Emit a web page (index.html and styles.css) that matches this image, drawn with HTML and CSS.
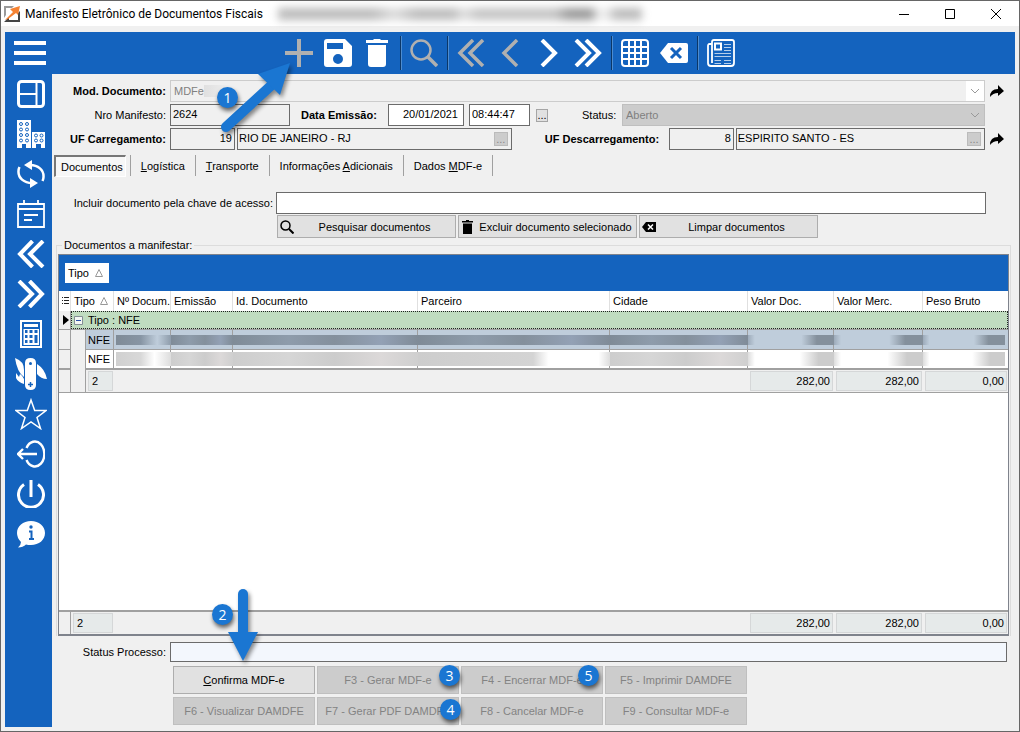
FILE: index.html
```html
<!DOCTYPE html>
<html lang="pt-BR">
<head>
<meta charset="utf-8">
<title>Manifesto Eletrônico de Documentos Fiscais</title>
<link rel="stylesheet" href="styles.css">
</head>
<body>
<div class="window">
  <header class="titlebar">
    <svg class="app-icon" viewBox="0 0 16 16"><path d="M0 0H10L8 2H2V9L0 12Z" fill="#999"/><path d="M0 16L5 11V14H14V7L16 5V16Z" fill="#444"/><path d="M1 14L9 6L6 3L16 0L14 9L12 7L4 13Z" fill="#f58232"/></svg>
    <h1 class="title">Manifesto Eletrônico de Documentos Fiscais</h1>
    <span class="title-smudge"></span>
    <div class="window-controls">
      <button aria-label="Minimizar"><svg viewBox="0 0 10 10"><path d="M0 5.500H10"/></svg></button>
      <button aria-label="Maximizar"><svg viewBox="0 0 10 10"><path d="M.5 .5H9.500V9.500H.5Z"/></svg></button>
      <button aria-label="Fechar"><svg viewBox="0 0 10 10"><path d="M0 0L10 10M10 0L0 10"/></svg></button>
    </div>
  </header>

  <div class="app">
    <nav class="toolbar">
      <button class="menu" aria-label="Menu"><svg viewBox="0 0 32 24"><path d="M0 2H32M0 12H32M0 22H32" stroke="#fff" stroke-width="4"/></svg></button>
      <div class="tools">
        <button class="off" aria-label="Novo"><svg viewBox="0 0 28 28"><path d="M14 0V28M0 14H28" stroke-width="4"/></svg></button>
        <button aria-label="Salvar"><svg viewBox="0 0 28 28"><path class="fill" fill-rule="evenodd" d="M3 0H21L28 7V25Q28 28 25 28H3Q0 28 0 25V3Q0 0 3 0ZM3 4V10H19V4ZM14 15A5 5 0 1 0 14 25A5 5 0 1 0 14 15Z"/></svg></button>
        <button aria-label="Excluir"><svg viewBox="0 0 28 28"><path class="fill" d="M3 1H10L11 0H17L18 1H25V4H3ZM5 6H23V25Q23 28 20 28H8Q5 28 5 25Z"/></svg></button>
        <i class="sep"></i>
        <button class="off" aria-label="Pesquisar"><svg viewBox="0 0 28 28"><circle cx="11" cy="11" r="9.500" stroke-width="2.500"/><path d="M18 18L27 27" stroke-width="3.500"/></svg></button>
        <i class="sep"></i>
        <button class="off" aria-label="Primeiro"><svg viewBox="0 0 28 28"><path d="M16 1L3 14L16 27M26 1L13 14L26 27" stroke-width="3.500"/></svg></button>
        <button class="off" aria-label="Anterior"><svg viewBox="0 0 28 28"><path d="M21 1L8 14L21 27" stroke-width="3.500"/></svg></button>
        <button aria-label="Próximo"><svg viewBox="0 0 28 28"><path d="M7 1L20 14L7 27" stroke-width="4"/></svg></button>
        <button aria-label="Último"><svg viewBox="0 0 28 28"><path d="M2 1L15 14L2 27M12 1L25 14L12 27" stroke-width="4"/></svg></button>
        <i class="sep"></i>
        <button aria-label="Grade"><svg viewBox="0 0 28 28"><rect x="1" y="1" width="26" height="26" rx="3" stroke-width="2"/><path d="M1 8H27M1 14H27M1 20H27M8 1V27M14 1V27M20 1V27" stroke-width="2"/></svg></button>
        <button aria-label="Limpar"><svg viewBox="0 0 28 28"><path class="fill" d="M8 4H26Q28 4 28 6V22Q28 24 26 24H8L0 14Z"/><path d="M11 9L21 19M21 9L11 19" stroke="#1463be" stroke-width="3"/></svg></button>
        <i class="sep"></i>
        <button aria-label="Relatório"><svg viewBox="0 0 28 28"><path d="M5 5H2.500Q1 5 1 7V24Q1 27 4 27H24Q27 27 27 24V3Q27 1 25 1H7Q5 1 5 3V24" stroke-width="1.800"/><rect x="8" y="4.500" width="6" height="6" stroke-width="2"/><path d="M17 5.500H24M17 8.500H24M17 11.500H24M7.500 14.500H24M7.500 17.500H24M7.500 21.500H14M17 21.500H24M7.500 24.500H14M17 24.500H24" stroke="#b7cfea" stroke-width="1"/></svg></button>
      </div>
    </nav>

    <aside class="sidebar">
      <button aria-label="Painel"><svg viewBox="0 0 28 28"><rect x="1.500" y="1.500" width="25" height="25" rx="3" stroke-width="3"/><path d="M3 14H19M19.500 3V25" stroke-width="2"/></svg></button>
      <button aria-label="Empresas"><svg viewBox="0 0 28 28"><path class="fill" d="M0 0H14V28H9V24H5V28H0ZM15 12H28V28H24V24H19V28H15Z"/><g class="holes"><circle cx="4" cy="4" r="1.500"/><circle cx="10" cy="4" r="1.500"/><circle cx="4" cy="9.500" r="1.500"/><circle cx="10" cy="9.500" r="1.500"/><circle cx="4" cy="15" r="1.500"/><circle cx="10" cy="15" r="1.500"/><circle cx="4" cy="20.500" r="1.500"/><circle cx="10" cy="20.500" r="1.500"/><circle cx="19" cy="15.500" r="1.500"/><circle cx="24.500" cy="15.500" r="1.500"/><circle cx="19" cy="20.500" r="1.500"/><circle cx="24.500" cy="20.500" r="1.500"/></g></svg></button>
      <button aria-label="Atualizar"><svg viewBox="0 0 28 28"><path d="M13 5C21 5 27 10 26.500 17Q26.500 19 25.500 21M15 23C7 23 1 18 1.500 11Q1.500 9 2.500 7" stroke-width="2.500"/><path class="fill" d="M7 5L15 0V10ZM21 23L13 18V28Z"/></svg></button>
      <button aria-label="Agenda"><svg viewBox="0 0 28 28"><path d="M1 4H27V27H1ZM1 9H27" stroke-width="1.800"/><path d="M7 0V5M21 0V5M7 15H21M7 20H15" stroke-width="1.800"/></svg></button>
      <button aria-label="Voltar"><svg viewBox="0 0 28 28"><path d="M15.500 1L3 14L15.500 27M26 1L13 14L26 27" stroke-width="4"/></svg></button>
      <button aria-label="Avançar"><svg viewBox="0 0 28 28"><path d="M2 1L15 14L2 27M12.500 1L25 14L12.500 27" stroke-width="4"/></svg></button>
      <button aria-label="Calculadora"><svg viewBox="0 0 28 28"><rect x="4" y="1" width="20" height="26" stroke-width="2"/><path d="M7 5.500H21" stroke-width="3"/><path class="fill" d="M6.500 9H22V25H6.500Z"/><path d="M8 11.500H10.500M12.500 11.500H15.500M17.500 11.500H20.500M8 16.500H10.500M12.500 16.500H15.500M8 21.500H10.500M12.500 21.500H15.500" stroke="#1463be" stroke-width="3"/><path d="M19 15V23" stroke="#1463be" stroke-width="3"/></svg></button>
      <button class="wide" aria-label="Ferramentas"><svg viewBox="0 0 32 32"><path class="fill" d="M10 5Q10 0 15.500 0T21 5V27Q21 32 15.500 32T10 27ZM0 0Q9 3 9 12V19Q2 14 0 0ZM22 6Q30 11 32 21Q26 21 22 16ZM1 15L4 19L5 16Q8 18 9 21V26Q3 24 1 20Z"/><circle cx="15.500" cy="5.500" r="1.500" fill="#1463be" stroke="none"/><path d="M15.500 24V29M13 26.500H18" stroke="#1463be" stroke-width="1.500"/></svg></button>
      <button class="wide" aria-label="Favoritos"><svg viewBox="0 0 32 32"><path d="M16 2L19.700 12.500H31L22 19.500L25.500 30.500L16 24L6.500 30.500L10 19.500L1 12.500H12.300Z" stroke-width="1.500"/></svg></button>
      <button aria-label="Sair"><svg viewBox="0 0 28 28"><path d="M9.500 8A9.500 12.500 0 1 1 9.500 20M1 14H20M6 9L1 14L6 19" stroke-width="2.400"/></svg></button>
      <button aria-label="Desligar"><svg viewBox="0 0 28 28"><path d="M7 4.500A12.500 12.500 0 1 0 21 4.500M14 0V17" stroke-width="3"/></svg></button>
      <button aria-label="Informações"><svg viewBox="0 0 28 28"><path class="fill" d="M14 1C22 1 28 6 28 13C28 20 22 25 14 25Q11 25 9 24.500Q6 27.500 1 27.500Q4 25 4 22Q0 18 0 13C0 6 6 1 14 1Z"/><circle cx="14" cy="7" r="1.700" fill="#1463be" stroke="none"/><path d="M12 11.500H14.500V19M12 19H17" stroke="#1463be" stroke-width="2"/></svg></button>
    </aside>

    <main class="content">
      <form class="form">
        <div class="row">
          <label class="lead strong" for="modelo">Mod. Documento:</label>
          <div class="combo light grow"><select id="modelo" disabled><option>MDFe</option></select><span class="combo-smudge"></span><svg viewBox="0 0 10 6"><path d="M1 1L5 5L9 1"/></svg></div>
          <svg class="share" viewBox="0 0 14 13"><path d="M0 12Q0 4 8 4V0L14 6L8 11V8Q3 8 0 12Z"/></svg>
        </div>
        <div class="row">
          <label class="lead" for="numero">Nro Manifesto:</label>
          <input class="field w120 muted" id="numero" value="2624" readonly>
          <label class="strong emission" for="data">Data Emissão:</label>
          <input class="field w76 right" id="data" value="20/01/2021">
          <input class="field w61" aria-label="Hora" value="08:44:47">
          <button class="dots outer" type="button" aria-label="Escolher data">...</button>
          <label class="status-label" for="status">Status:</label>
          <div class="combo dark grow"><select id="status" disabled><option>Aberto</option></select><svg viewBox="0 0 10 6"><path d="M1 1L5 5L9 1"/></svg></div>
          <span class="share"></span>
        </div>
        <div class="row">
          <label class="lead strong" for="ufc">UF Carregamento:</label>
          <input class="field w65 muted right" id="ufc" value="19" readonly>
          <div class="lookup grow-a"><input class="field muted" aria-label="Estado de carregamento" value="RIO DE JANEIRO - RJ" readonly><button class="dots" type="button" disabled aria-label="Buscar carregamento">...</button></div>
          <label class="strong unload" for="ufd">UF Descarregamento:</label>
          <input class="field w65 muted right" id="ufd" value="8" readonly>
          <div class="lookup grow-b"><input class="field muted" aria-label="Estado de descarregamento" value="ESPIRITO SANTO - ES" readonly><button class="dots" type="button" disabled aria-label="Buscar descarregamento">...</button></div>
          <svg class="share" viewBox="0 0 14 13"><path d="M0 12Q0 4 8 4V0L14 6L8 11V8Q3 8 0 12Z"/></svg>
        </div>
      </form>

      <div class="tabs" role="tablist">
        <button class="tab active" role="tab">Documentos</button>
        <button class="tab" role="tab"><u>L</u>ogística</button>
        <button class="tab" role="tab"><u>T</u>ransporte</button>
        <button class="tab" role="tab">Informações <u>A</u>dicionais</button>
        <button class="tab" role="tab">Dados <u>M</u>DF-e</button>
      </div>

      <div class="row key-row">
        <label class="key-label" for="chave">Incluir documento pela chave de acesso:</label>
        <input class="field grow" id="chave">
      </div>
      <div class="actions">
        <button><svg viewBox="0 0 14 14"><circle cx="5.500" cy="5.500" r="4.500" fill="none" stroke="#000" stroke-width="1.500"/><path d="M9 9L13.500 13.500" stroke="#000" stroke-width="2"/></svg><span>Pesquisar documentos</span></button>
        <button><svg viewBox="0 0 14 14"><path d="M1 1H5V0H8V1H12V2.500H1ZM2 3.500H11V14H2Z"/></svg><span>Excluir documento selecionado</span></button>
        <button><svg viewBox="0 0 14 14"><path d="M4 2H14V12H4L0 7Z"/><path d="M6 4.500L11 9.500M11 4.500L6 9.500" stroke="#fff" stroke-width="1.500"/></svg><span>Limpar documentos</span></button>
      </div>

      <fieldset class="docs">
        <legend>Documentos a manifestar:</legend>
        <div class="grid">
          <div class="groupbar"><button class="chip">Tipo <svg viewBox="0 0 8 8"><path d="M4 .5L7.500 7.500H.5Z"/></svg></button></div>
          <table class="data">
            <colgroup><col class="c-mark"><col class="c-indent"><col class="c-tipo"><col class="c-num"><col class="c-emi"><col class="c-id"><col class="c-parc"><col class="c-cid"><col class="c-vd"><col class="c-vm"><col class="c-pb"></colgroup>
            <thead>
              <tr><th class="mark"><svg viewBox="0 0 8 10"><path d="M0 1.500H1M2 1.500H7M0 4.500H1M2 4.500H7M0 7.500H1M2 7.500H7" stroke="#222"/></svg></th><th colspan="2">Tipo <svg class="sort" viewBox="0 0 8 8"><path d="M4 .5L7.500 7.500H.5Z"/></svg></th><th>Nº Docum.</th><th>Emissão</th><th>Id. Documento</th><th>Parceiro</th><th>Cidade</th><th>Valor Doc.</th><th>Valor Merc.</th><th>Peso Bruto</th></tr>
            </thead>
            <tbody>
              <tr class="group"><td class="mark"><svg viewBox="0 0 6 10"><path d="M0 0L6 5L0 10Z"/></svg></td><td colspan="10"><div class="group-line"><svg viewBox="0 0 9 9"><path d="M.5 .5H8.500V8.500H.5Z" fill="#f4f7f4" stroke="#858f96"/><path d="M2 4.500H7" stroke="#2a50a8"/></svg>Tipo : NFE</div></td></tr>
              <tr class="selected"><td class="mark"></td><td class="indent"></td><td>NFE</td><td><i class="smudge part"></i></td><td><i class="smudge"></i></td><td><i class="smudge"></i></td><td><i class="smudge"></i></td><td><i class="smudge"></i></td><td><i class="smudge end"></i></td><td><i class="smudge end"></i></td><td><i class="smudge end"></i></td></tr>
              <tr class="plain"><td class="mark"></td><td class="indent"></td><td>NFE</td><td><i class="smudge part"></i></td><td><i class="smudge"></i></td><td><i class="smudge"></i></td><td><i class="smudge two-thirds"></i></td><td><i class="smudge"></i></td><td><i class="smudge end"></i></td><td><i class="smudge end"></i></td><td><i class="smudge end"></i></td></tr>
              <tr class="sum"><td class="mark"></td><td class="indent"></td><td><span class="box">2</span></td><td colspan="5"></td><td><span class="box num">282,00</span></td><td><span class="box num">282,00</span></td><td><span class="box num">0,00</span></td></tr>
            </tbody>
          </table>
          <div class="blank"></div>
          <table class="data total">
            <colgroup><col class="c-mark"><col class="c-indent"><col class="c-tipo"><col class="c-num"><col class="c-emi"><col class="c-id"><col class="c-parc"><col class="c-cid"><col class="c-vd"><col class="c-vm"><col class="c-pb"></colgroup>
            <tbody><tr class="sum"><td class="mark"></td><td colspan="2"><span class="box">2</span></td><td colspan="5"></td><td><span class="box num">282,00</span></td><td><span class="box num">282,00</span></td><td><span class="box num">0,00</span></td></tr></tbody>
          </table>
        </div>
      </fieldset>

      <div class="row process">
        <label class="lead" for="processo">Status Processo:</label>
        <input class="field grow" id="processo" readonly>
      </div>
      <div class="commands">
        <button><span><u>C</u>onfirma MDF-e</span></button>
        <button disabled>F3 - Gerar MDF-e</button>
        <button disabled>F4 - Encerrar MDF-e</button>
        <button disabled>F5 - Imprimir DAMDFE</button>
        <button disabled>F6 - Visualizar DAMDFE</button>
        <button disabled>F7 - Gerar PDF DAMDFE</button>
        <button disabled>F8 - Cancelar MDF-e</button>
        <button disabled>F9 - Consultar MDF-e</button>
      </div>
    </main>
  </div>

  <svg class="arrow arrow-new" viewBox="0 0 76 76"><path d="M7 67L56 22" stroke="#1a76d2" stroke-width="10" stroke-linecap="round"/><path d="M71 3L39 14L61 35Z" fill="#1a76d2"/></svg>
  <svg class="arrow arrow-confirm" viewBox="0 0 30 74"><path d="M15 6V48" stroke="#1a76d2" stroke-width="10" stroke-linecap="round"/><path d="M0 44H30L15 73Z" fill="#1a76d2"/></svg>
  <span class="badge b1">1</span>
  <span class="badge b2">2</span>
  <span class="badge b3">3</span>
  <span class="badge b4">4</span>
  <span class="badge b5">5</span>
</div>
</body>
</html>
```
FILE: styles.css
```css
* { box-sizing: border-box; }
html, body { height: 100%; }
body { margin: 0; font: 11px/14px "Liberation Sans", Arial, sans-serif; color: #000; }
button, input, select { font: inherit; color: inherit; margin: 0; padding: 0; border: 0; border-radius: 0; background: none; }
svg { display: block; flex: none; }

.window { position: relative; display: flex; flex-direction: column; min-height: 100%; background: #f0f0f0; border: 1px solid #666; }
.titlebar { display: flex; align-items: center; height: 25px; padding-left: 3px; background: #fff; }
.app-icon { width: 16px; height: 16px; }
.title { margin: 0 15px 0 5px; font: 12px/16px Roboto, "Open Sans", sans-serif; white-space: nowrap; }
.title-smudge { width: 364px; height: 12px; filter: blur(4px); background: linear-gradient(90deg, #bbb 0 26%, #ddd 32%, #bbb 38% 48%, #e0e0e0 51%, #c4c4c4 55% 76%, #999 80% 86%, #eee 88% 90%, #bbb 93%); }
.window-controls { display: flex; margin-left: auto; }
.window-controls button { display: grid; place-items: center; width: 46px; height: 24px; }
.window-controls svg { width: 10px; height: 10px; fill: none; stroke: #000; }

.app { flex: 1; display: grid; grid-template: 42px 1fr / 47px 1fr; margin: 6px 4px 4px; }
.toolbar { grid-column: 1 / -1; display: grid; grid-template-columns: 1fr auto 1fr; align-items: center; background: #1463be; }
.menu { justify-self: start; margin-left: 9px; }
.menu svg { width: 32px; height: 24px; }
.tools { display: flex; align-items: center; }
.tools button { display: grid; place-items: center; width: 39px; height: 42px; }
.tools svg, .sidebar svg { width: 28px; height: 28px; fill: none; stroke: #fff; }
.tools .fill, .sidebar .fill { fill: #fff; stroke: none; }
.tools .off svg { stroke: #b0b0b0; }
.holes { stroke: #1463be; }
.sep { width: 2px; height: 34px; margin: 0 3px; border-left: 1px solid #0b3768; border-right: 1px solid #4d8cd0; }
.sidebar { display: flex; flex-direction: column; padding-left: 5px; background: #1463be; }
.sidebar button { display: grid; place-items: center; height: 40px; }
.sidebar .wide svg { width: 32px; height: 32px; }

.content { display: flex; flex-direction: column; min-width: 0; padding-top: 6px; }
.form { display: flex; flex-direction: column; gap: 2px; }
.row { display: flex; align-items: center; height: 22px; padding-right: 11px; }
label { white-space: nowrap; }
.strong { font-weight: bold; }
.lead { width: 114px; margin-right: 4px; text-align: right; }
.grow { flex: 1; min-width: 0; }
.grow-a { flex: 275 1 0; }
.grow-b { flex: 249 1 0; }
.field { height: 22px; padding: 0 4px 2px 2px; border: 1px solid #6b6b6b; background: #fff; }
.muted { background: #f0f0f0; }
.right { text-align: right; padding-right: 5px; }
.w120 { width: 120px; }
.w76 { width: 76px; margin-right: 5px; }
.w61 { width: 61px; margin-right: 6px; }
.w65 { width: 65px; margin-right: 2px; padding-right: 2px; }
.emission { width: 87px; margin-left: 11px; }
.status-label { width: 40px; margin-left: 34px; }
.unload { width: 124px; margin-left: 33px; }
.dots { width: 14px; height: 14px; border: 1px solid #bbb; background: #ccc; color: #888; line-height: 10px; }
.dots.outer { width: 12px; height: 13px; border-color: #a5a5a5; background: #e1e1e1; color: #000; }
.lookup { display: flex; align-items: center; min-width: 0; height: 22px; padding-right: 3px; border: 1px solid #6b6b6b; }
.lookup .field { flex: 1; min-width: 0; height: 20px; padding-bottom: 2px; border: 0; padding-left: 1px; }
.combo { position: relative; display: flex; align-items: center; height: 22px; border: 1px solid #ccc; }
.combo select { width: 100%; height: 20px; padding-left: 3px; appearance: none; opacity: 1; color: #808080; }
.combo svg { position: absolute; right: 4px; width: 10px; height: 6px; fill: none; stroke: #999; }
.combo.light { background: linear-gradient(90deg, #f0f0f0 0 calc(100% - 18px), #fff 0); }
.combo.dark { border-color: #bfbfbf; background: #ccc; }
.combo-smudge { position: absolute; left: 33px; width: 28px; height: 12px; background: linear-gradient(90deg, #e0e0e0, #f0f0f0); }
.share { flex: none; width: 14px; height: 13px; margin-left: 5px; }

.tabs { display: flex; align-items: flex-start; height: 22px; margin: 5px 0 0 2px; }
.tab { height: 21px; padding: 0 10px; border-right: 1px solid #a0a0a0; white-space: nowrap; }
.tab.active { height: 22px; padding: 0 2px 0 5px; border: 1px solid #fff; border-top: 2px solid #777; border-left: 2px solid #777; background: #f7f7f7; }
.tab.active + .tab { margin-left: 4px; border-left: 1px solid #a0a0a0; }

.key-row { margin-top: 15px; padding-right: 29px; }
.key-label { width: 221px; margin-right: 3px; text-align: right; }
.actions { display: flex; gap: 2px; margin: 1px 0 0 225px; }
.actions button { display: flex; align-items: center; width: 179px; height: 23px; padding-left: 2px; border: 1px solid #adadad; background: #e1e1e1; }
.actions svg { width: 14px; height: 14px; }
.actions span { flex: 1; text-align: center; white-space: nowrap; }

.docs { flex: 1; display: flex; min-width: 0; margin: 0 4px 0 4px; padding: 2px 1px 0; border: 1px solid #dcdcdc; border-bottom: 0; }
.docs legend { margin-left: 4px; padding: 0 2px; line-height: 14px; }
.grid { flex: 1; display: flex; flex-direction: column; min-width: 0; height: 100%; border: 1px solid #7f838c; border-bottom-width: 2px; background: #fff; }
.groupbar { display: flex; align-items: center; height: 36px; padding-left: 6px; background: #1463be; }
.chip { display: flex; align-items: center; gap: 6px; width: 44px; height: 20px; padding-left: 3px; background: #fff; }
.chip svg, .sort { width: 8px; height: 8px; fill: none; stroke: #999; }
.data { width: 100%; table-layout: fixed; border-collapse: separate; border-spacing: 0; }
.c-mark { width: 12px; } .c-indent { width: 15px; } .c-tipo { width: 28px; } .c-num { width: 57px; } .c-emi { width: 62px; }
.c-id { width: 185px; } .c-cid { width: 138px; } .c-vd { width: 86px; } .c-vm { width: 89px; } .c-pb { width: 85px; }
.data th, .data td { height: 20px; padding: 0; white-space: nowrap; text-align: left; font-weight: normal; }
.data th { padding-left: 3px; border-right: 1px solid #e0e0e0; }
.data th:last-child { border-right: 0; }
.data .sort { display: inline-block; margin-left: 2px; }
.data td { border-right: 1px solid #a0a0a0; border-bottom: 1px solid #a0a0a0; }
.data td:last-child { border-right: 0; }
.data .mark, .data .indent { background: #f0f0f0; }
.data th.mark { background: #fff; }
.mark svg { width: 8px; height: 10px; }
.data td.mark svg { width: 6px; margin-left: 4px; }
.data .indent { border-bottom: 0; }
.data .group td { height: 19px; border-bottom: 1px solid #a0a0a0; }
.group-line { display: flex; align-items: center; gap: 5px; height: 18px; padding-left: 2px; border: 1px dotted #222; background: #c0dcc0; }
.group-line svg { width: 9px; height: 9px; }
.selected td { background: #bfcddb; padding-left: 2px; }
.plain td { padding-left: 2px; }
.plain td:not(.indent) { border-bottom-width: 2px; }
.smudge { display: block; height: 10px; margin: 0 -1px 0 -2px; background: linear-gradient(90deg, #7f8b97, #8e9cab 30%, #84909c 55%, #93a1b5 80%, #7f8b97); }
td:last-child .smudge { margin-right: 3px; }
.smudge.part { margin-left: 0; background: linear-gradient(90deg, #7f8b97, #8795a4 45%, #bfcddb 75%, #8e9cab); }
.smudge.end { background: linear-gradient(90deg, #9dabba, #bfcddb 8% 62%, #84909c 80%); }
.plain .smudge { height: 14px; background: linear-gradient(90deg, #cdcdcd, #d6d6d6 30%, #ccc 55%, #dcd9d9 80%, #cfcfcf); }
.plain .smudge.part { background: linear-gradient(90deg, #d0d0d0, #d8d8d8 45%, #fff 70%, #ddd); }
.plain .smudge.two-thirds { background: linear-gradient(90deg, #cdcdcd, #d4d4d4 60%, #fff 68% 94%, #ddd); }
.plain .smudge.end { background: linear-gradient(90deg, #ddd, #fff 8% 60%, #ccc 82%); }
.data .sum td { height: 23px; padding: 0 1px 0 2px; border-right: 0; background: #f0f0f0; }
.data .sum .mark, .data .sum .indent { border-right: 1px solid #a0a0a0; }
.data .sum .indent { border-bottom: 1px solid #a0a0a0; }
.box { display: block; height: 20px; padding: 0 3px; border: 1px solid #d5d7d8; background: #e6eaea; line-height: 19px; }
.box.num { padding-right: 2px; text-align: right; }
.blank { flex: 1; }
.total { border-top: 2px solid #a0a0a0; }
.data.total .sum td { height: 22px; border-bottom: 0; }

.process { height: 20px; margin-top: 6px; padding-right: 8px; }
.process .field { height: 20px; background: #f3f7fd; }
.commands { display: grid; grid-template-columns: repeat(4, 142px); gap: 3px 2px; margin: 4px 0 2px 121px; }
.commands button { height: 28px; border: 1px solid #adadad; background: #e1e1e1; white-space: nowrap; }
.commands button:disabled { border-color: #bfbfbf; background: #ccc; color: #838383; }

.arrow { position: absolute; filter: drop-shadow(2px 3px 2px rgba(0, 0, 0, .45)); }
.arrow-new { left: 218px; top: 59px; width: 76px; height: 76px; }
.arrow-confirm { left: 227px; top: 587px; width: 30px; height: 74px; }
.badge { position: absolute; width: 21px; height: 21px; border-radius: 50%; background: #1a76d2; color: #fff; font: 14px/21px "Open Sans", sans-serif; text-align: center; box-shadow: 1px 3px 4px rgba(0, 0, 0, .6); }
.b1 { left: 216px; top: 86px; }
.b2 { left: 211px; top: 603px; }
.b3 { left: 438px; top: 664px; }
.b4 { left: 439px; top: 698px; }
.b5 { left: 577px; top: 664px; }
```
